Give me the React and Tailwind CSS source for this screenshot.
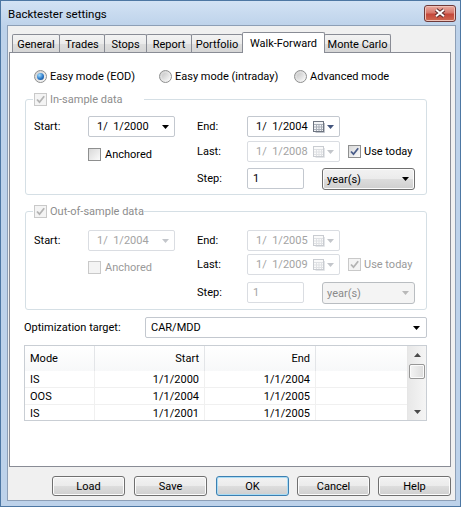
import React from 'react';

const tabs = [
  { name: 'General', w: 'w-[48px]' },
  { name: 'Trades', w: 'w-[46px]' },
  { name: 'Stops', w: 'w-[43px]' },
  { name: 'Report', w: 'w-[46px]' },
  { name: 'Portfolio', w: 'w-[52px]' },
  { name: 'Walk-Forward', w: 'w-[83px]', active: true },
  { name: 'Monte Carlo', w: 'w-[67px]' },
];

const rows = [
  { mode: 'IS', start: '1/1/2000', end: '1/1/2004' },
  { mode: 'OOS', start: '1/1/2004', end: '1/1/2005' },
  { mode: 'IS', start: '1/1/2001', end: '1/1/2005' },
];

function Arrow({ color = '#000' }) {
  return (
    <svg width="7" height="4" viewBox="0 0 7 4" className="shrink-0">
      <path d="M0 0h7L3.5 4z" fill={color} />
    </svg>
  );
}

function CalIcon({ disabled }) {
  const edge = disabled ? '#c9ccd1' : '#6e7581';
  const grid = disabled ? '#dfe1e4' : '#a9afb8';
  const shade = disabled ? '#e4e6e9' : '#bfc3ca';
  return (
    <svg width="13" height="12" viewBox="0 0 13 12" className="shrink-0">
      <path d="M11.5 2v9.5h-9" fill="none" stroke={shade} />
      <rect x="0.5" y="0.5" width="10" height="10" fill={disabled ? '#fafafa' : '#f3f4f6'} stroke={edge} />
      <path d="M1 3.5h9M1 6h9M1 8.5h9M3.5 3.5v6.5M6 3.5v6.5M8.5 3.5v6.5" stroke={grid} />
    </svg>
  );
}

function Check({ checked, disabled }) {
  return (
    <span
      className={`flex items-center justify-center w-[13px] h-[13px] border shrink-0 ${
        disabled ? 'border-[#c9c9c9] bg-[#f4f4f4]' : 'border-[#8e8f8f] bg-[linear-gradient(135deg,#d8d8d8,#fbfbfb)]'
      }`}
    >
      {checked && (
        <svg width="11" height="11" viewBox="0 0 11 11">
          <path d="M2 5.5L4.5 8.2L9.2 2.3" fill="none" stroke={disabled ? '#b3b3b3' : '#4a5d8a'} strokeWidth="1.8" />
        </svg>
      )}
    </span>
  );
}

function Radio({ on }) {
  return (
    <span className="flex items-center justify-center w-[13px] h-[13px] rounded-full border border-[#8e8f8f] bg-[linear-gradient(135deg,#cfcfcf,#fbfbfb)] shrink-0">
      <span
        className={`w-[7px] h-[7px] rounded-full ${
          on
            ? 'bg-[radial-gradient(circle_at_35%_30%,#a6e0ff,#2a78c8_55%,#0d3c78)]'
            : 'bg-[linear-gradient(135deg,#c8c8c8,#f3f3f3)]'
        }`}
      />
    </span>
  );
}

function DateBox({ value, disabled, cal, w }) {
  return (
    <div
      className={`flex items-center h-[21px] ${w} border rounded-[2px] bg-white pl-[8px] pr-[5px] ${
        disabled ? 'border-[#dadde2] text-[#a3a3a3]' : 'border-[#c3c8cf] text-black'
      }`}
    >
      <span className="flex-1 whitespace-pre">{value}</span>
      {cal && <CalIcon disabled={disabled} />}
      <span className="ml-[1px]">
        <Arrow color={disabled ? '#c3c6cb' : cal ? '#44557d' : '#000'} />
      </span>
    </div>
  );
}

function UnitSelect({ disabled }) {
  return (
    <div
      className={`flex items-center h-[22px] w-[93px] border rounded-[3px] pl-[4px] pr-[5px] ${
        disabled
          ? 'border-[#b9bdc1] bg-[#f4f4f4] text-[#8a8a8a]'
          : 'border-[#707070] bg-[linear-gradient(#f2f2f2_0%,#ebebeb_50%,#dddddd_50%,#cfcfcf_100%)] shadow-[inset_0_0_0_1px_#fcfcfc]'
      }`}
    >
      <span className="flex-1">year(s)</span>
      <Arrow color={disabled ? '#b8b8b8' : '#000'} />
    </div>
  );
}

function SampleGroup({ title, disabled, start, end, last, anchored, useToday, boxH, pt, gap1, gap2 }) {
  return (
    <div className={`relative ml-[15px] mt-[16px] w-[402px] ${boxH} border border-[#d5dfe5] rounded-[3px] ${pt} pl-[8px]`}>
      {/* caption with checkbox sitting on the frame */}
      <div className="absolute left-[7px] -top-[7px] w-[111px] h-[13px] bg-white flex items-center gap-[3px] pl-[1px] text-[#8d8d8d]">
        <Check checked disabled />
        <span>{title}</span>
      </div>

      <div className="flex items-center h-[21px]">
        <span className="w-[54px]">Start:</span>
        <DateBox value={start} disabled={disabled} w="w-[87px]" />
        <span className="w-[22px]" />
        <span className="w-[50px]">End:</span>
        <DateBox value={end} disabled={disabled} cal w="w-[93px]" />
      </div>

      <div className={`flex items-center h-[21px] ${gap1}`}>
        <span className="w-[54px]" />
        <div className={`w-[109px] mt-[6px] flex items-center gap-[4px] ${anchored ? 'text-[#9a9a9a]' : ''}`}>
          <Check disabled={anchored} />
          <span>Anchored</span>
        </div>
        <span className="w-[50px]">Last:</span>
        <DateBox value={last} disabled cal w="w-[93px]" />
        <div className={`ml-[8px] flex items-center gap-[3px] ${useToday ? 'text-[#9a9a9a]' : ''}`}>
          <Check checked disabled={useToday} />
          <span>Use today</span>
        </div>
      </div>

      <div className={`flex items-start ${gap2}`}>
        <span className="w-[163px]" />
        <span className="w-[50px] h-[21px] flex items-center">Step:</span>
        <div
          className={`w-[57px] h-[21px] flex items-center pl-[5px] border rounded-[2px] bg-white ${
            disabled ? 'border-[#dadde2] text-[#a3a3a3]' : 'border-[#c3c8cf]'
          }`}
        >
          1
        </div>
        <span className="w-[18px]" />
        <UnitSelect disabled={disabled} />
      </div>
    </div>
  );
}

function ScrollBar() {
  return (
    <div className="w-[19px] flex flex-col border-l border-[#e6e6e6] bg-[linear-gradient(90deg,#e8e8e8,#f5f5f5)]">
      <div className="h-[17px] flex items-center justify-center">
        <svg width="7" height="4" viewBox="0 0 7 4"><path d="M0 4h7L3.5 0z" fill="#4a4a4a" /></svg>
      </div>
      <div className="mt-[1px] mx-[1px] h-[15px] rounded-[2px] border border-[#979797] bg-[linear-gradient(90deg,#f4f4f4,#dcdcdc)] shadow-[inset_0_0_0_1px_#fbfbfb]" />
      <div className="flex-1" />
      <div className="h-[17px] flex items-center justify-center">
        <Arrow color="#4a4a4a" />
      </div>
    </div>
  );
}

function Button({ label, def, ml = '' }) {
  return (
    <button
      className={`${ml} w-[73px] h-[20px] rounded-[3px] border flex items-center justify-center bg-[linear-gradient(#f2f2f2_0%,#ebebeb_50%,#dddddd_50%,#cfcfcf_100%)] ${
        def
          ? 'border-[#3c7fb1] shadow-[inset_0_0_0_1px_#a9dcf5]'
          : 'border-[#707070] shadow-[inset_0_0_0_1px_#fcfcfc]'
      }`}
    >
      {label}
    </button>
  );
}

export default function App() {
  return (
    <div className="w-[461px] h-[507px] flex flex-col border border-[#4d77a3] bg-[linear-gradient(#d2e2f4,#bdd2ea_26px,#bdd2ea)] font-['Roboto','Liberation_Sans',sans-serif] text-[11px] leading-[13px] text-black select-none">
      {/* title bar */}
      <div className="h-[24px] flex items-center pl-[7px]">
        <span className="mt-[2px] text-[11.5px]">Backtester settings</span>
        <button className="ml-auto mr-[4px] w-[32px] h-[17px] rounded-[3px] border border-[#6e3a3a] flex items-center justify-center bg-[linear-gradient(#e9aba1_0%,#d7786c_45%,#c4473a_55%,#cf6a52_100%)] shadow-[inset_0_0_0_1px_#f0c2b8]">
          <svg width="14" height="10" viewBox="0 0 14 10">
            <path d="M3 1.8L11 8.2M11 1.8L3 8.2" stroke="#5c2b2b" strokeWidth="4" />
            <path d="M3 1.8L11 8.2M11 1.8L3 8.2" stroke="#fff" strokeWidth="2" />
          </svg>
        </button>
      </div>

      {/* client area */}
      <div className="ml-[6px] w-[449px] h-[476px] border border-[#8d9fb6] bg-[#f0f0f0] flex flex-col">
        <div className="mt-[6px] pl-[4px] flex items-end">
          {tabs.map((t, i) => (
            <div
              key={t.name}
              className={`${t.w} ${i > 0 ? '-ml-px' : ''} flex items-center justify-center border-t border-x border-[#898c95] rounded-t-[2px] ${
                t.active
                  ? 'relative z-10 h-[21px] -mb-px bg-white'
                  : 'h-[18px] pt-[2px] bg-[linear-gradient(#f3f3f3,#ebebeb_50%,#dedede_50%,#d6d6d6)]'
              }`}
            >
              {t.name}
            </div>
          ))}
        </div>

        <div className="ml-[1px] w-[442px] h-[415px] border border-[#898c95] bg-white flex flex-col">
          <div className="mt-[17px] pl-[24px] flex items-center h-[13px]">
            <div className="w-[125px] flex items-center gap-[3px]">
              <Radio on />
              <span>Easy mode (EOD)</span>
            </div>
            <div className="w-[135px] flex items-center gap-[3px]">
              <Radio />
              <span>Easy mode (intraday)</span>
            </div>
            <div className="flex items-center gap-[3px]">
              <Radio />
              <span>Advanced mode</span>
            </div>
          </div>

          <SampleGroup
            title="In-sample data"
            start="1/  1/2000"
            end="1/  1/2004"
            last="1/  1/2008"
            boxH="h-[96px]"
            pt="pt-[16px]"
            gap1="mt-[4px]"
            gap2="mt-[6px]"
          />
          <SampleGroup
            title="Out-of-sample data"
            disabled
            anchored
            useToday
            start="1/  1/2004"
            end="1/  1/2005"
            last="1/  1/2009"
            boxH="h-[99px]"
            pt="pt-[18px]"
            gap1="mt-[3px]"
            gap2="mt-[7px]"
          />

          <div className="mt-[7px] pl-[14px] flex items-center h-[21px]">
            <span className="w-[121px]">Optimization target:</span>
            <div className="w-[282px] h-[21px] flex items-center pl-[5px] pr-[6px] border border-[#c3c8cf] rounded-[2px] bg-white">
              <span className="flex-1">CAR/MDD</span>
              <Arrow />
            </div>
          </div>

          <div className="mt-[7px] ml-[14px] w-[403px] h-[76px] border border-[#c9ced4] flex overflow-hidden">
            <div className="flex-1 flex flex-col">
              <div className="h-[25px] shrink-0 flex bg-[linear-gradient(#ffffff,#f7f8f9)]">
                <div className="w-[70px] border-r border-[#e3e5e8] flex items-center pl-[5px]">Mode</div>
                <div className="w-[110px] border-r border-[#e3e5e8] flex items-center justify-end pr-[5px]">Start</div>
                <div className="w-[111px] border-r border-[#e3e5e8] flex items-center justify-end pr-[5px]">End</div>
                <div className="flex-1" />
              </div>
              {rows.map((r, i) => (
                <div key={i} className="h-[17px] shrink-0 flex border-b border-[#f0f0f0]">
                  <div className="w-[70px] border-r border-[#f0f0f0] flex items-center pl-[5px]">{r.mode}</div>
                  <div className="w-[110px] border-r border-[#f0f0f0] flex items-center justify-end pr-[5px]">{r.start}</div>
                  <div className="w-[111px] border-r border-[#f0f0f0] flex items-center justify-end pr-[5px]">{r.end}</div>
                  <div className="flex-1" />
                </div>
              ))}
            </div>
            <ScrollBar />
          </div>
        </div>

        <div className="mt-[9px] pl-[44px] flex">
          <Button label="Load" />
          <Button label="Save" ml="ml-[9px]" />
          <Button label="OK" def ml="ml-[9px]" />
          <Button label="Cancel" ml="ml-[8px]" />
          <Button label="Help" ml="ml-[8px]" />
        </div>
      </div>
    </div>
  );
}
